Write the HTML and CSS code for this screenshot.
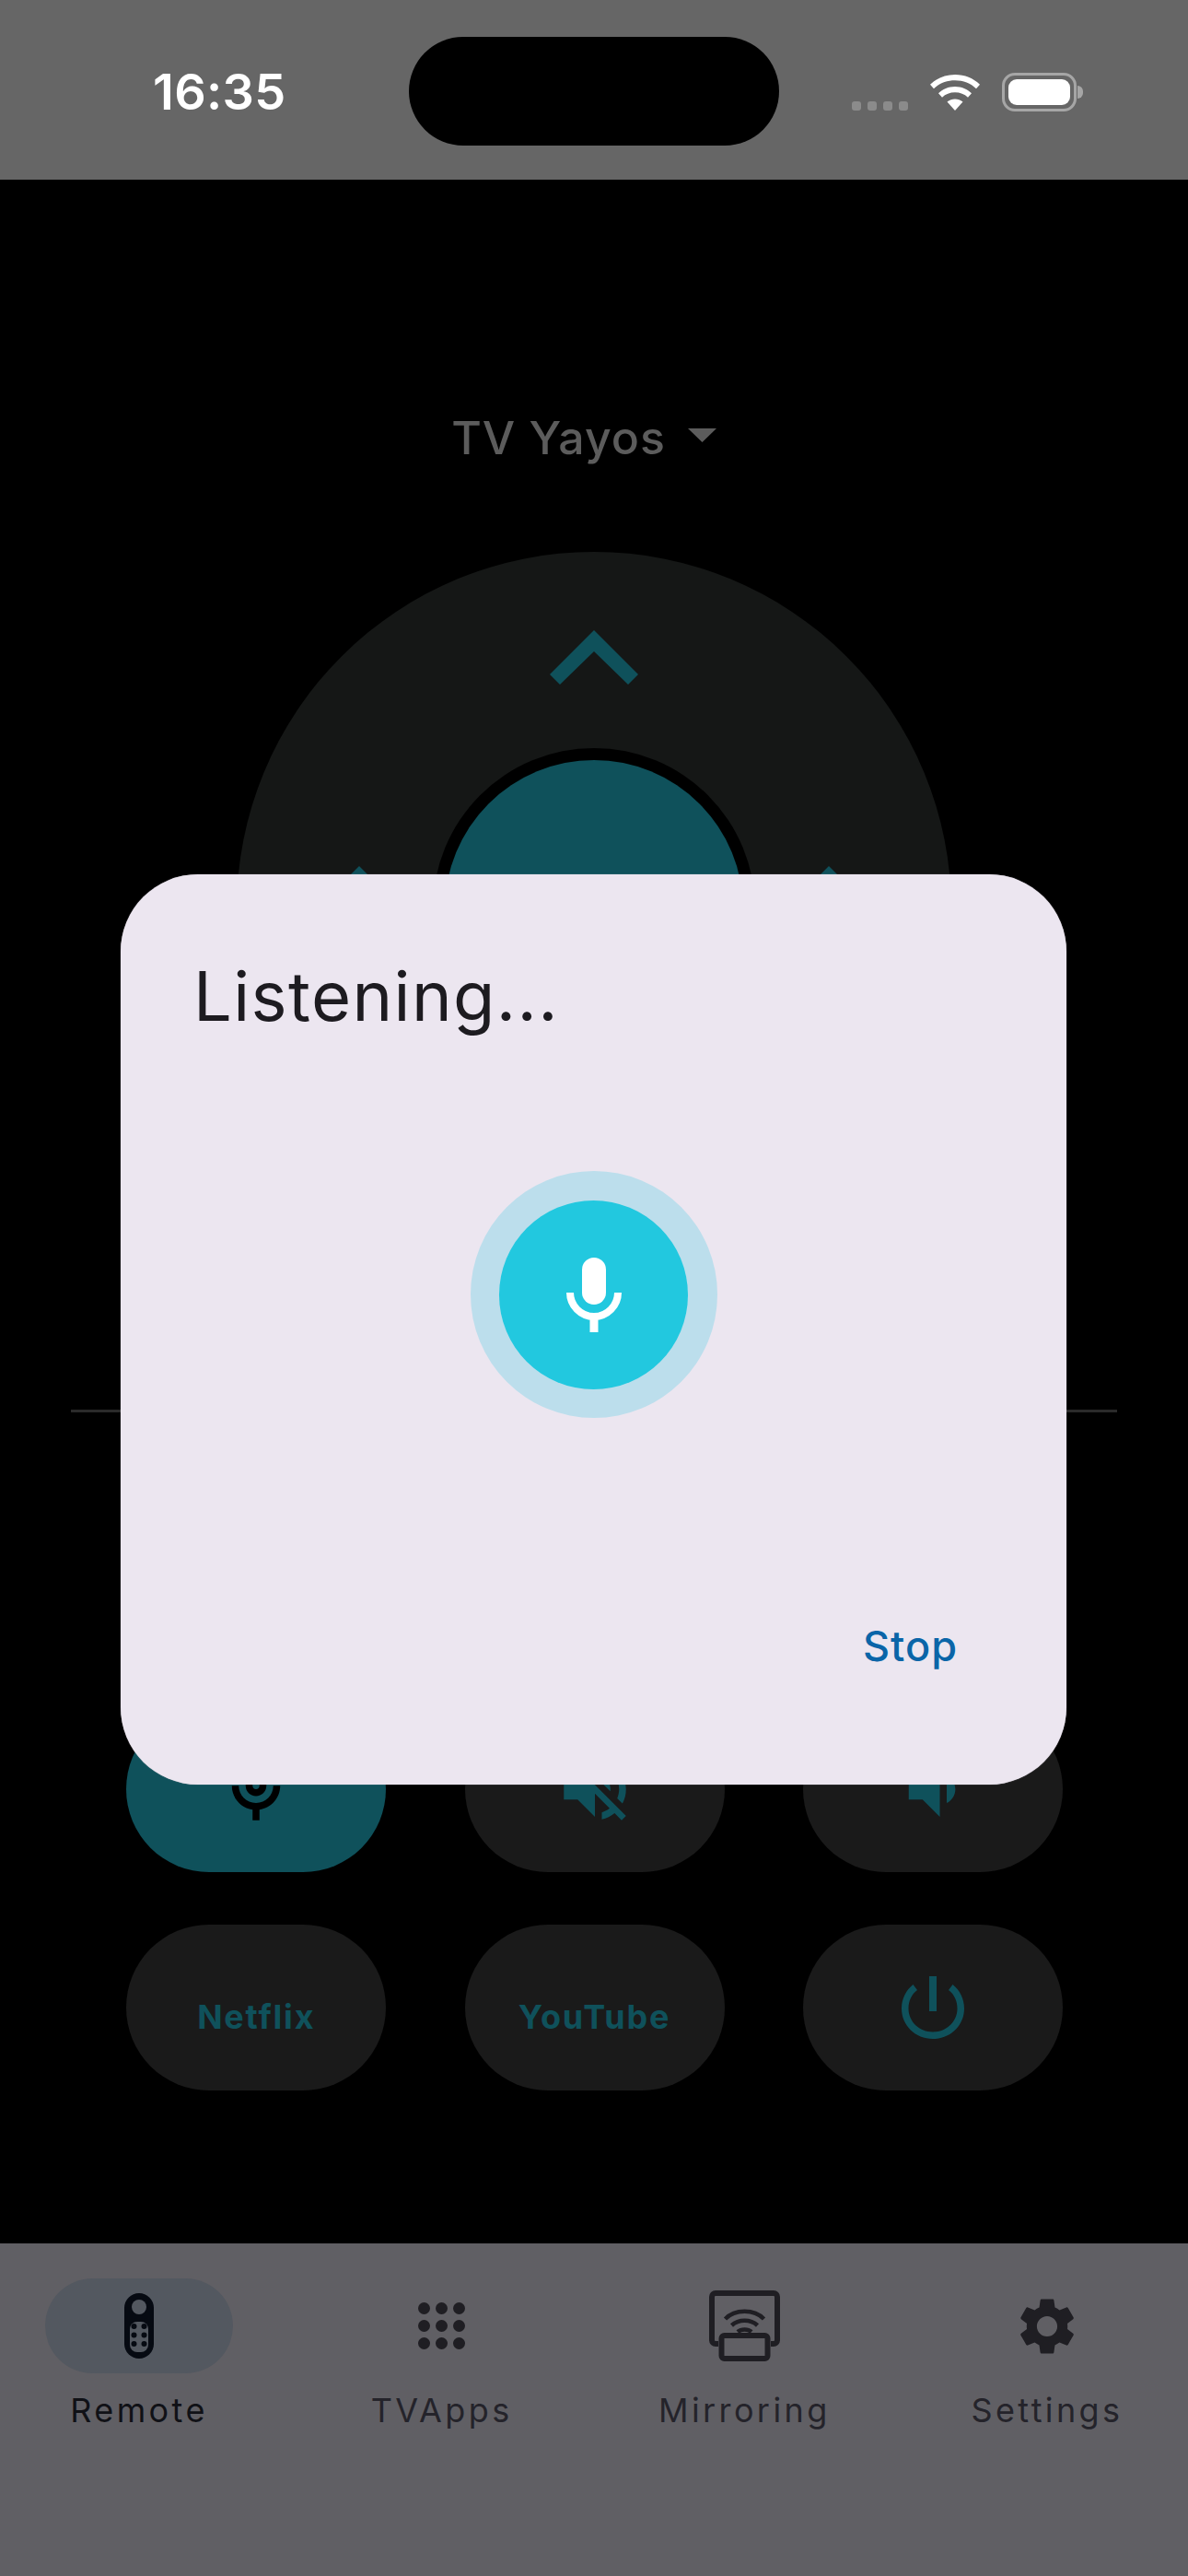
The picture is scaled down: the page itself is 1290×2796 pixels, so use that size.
FILE: index.html
```html
<!doctype html>
<html>
<head>
<title>TV Remote</title>
<link rel="stylesheet" href="styles.css">
</head>
<body>
<div class="screen">
    <header class="status-bar">
        <span class="clock">16:35</span>
        <div class="island"></div>
        <div class="status-icons">
            <div class="signal"><i></i><i></i><i></i><i></i></div>
            <svg class="wifi" viewBox="0 0 54 39" fill="#fff">
                <path d="M27 39 18.500 29.500C23.500 25.500 30.500 25.500 35.500 29.500Z"/>
                <path d="M27 13C34 13 40.600 15.800 45 20.200L41 24.700C37.300 21.200 32.500 19.300 27 19.300S16.700 21.200 13 24.700L9 20.200C13.400 15.800 20 13 27 13Z"/>
                <path d="M27 0C37.500 0 47 4 54 10.700L50 15.200C44 9.500 36 6.300 27 6.300S10 9.500 4 15.200L0 10.700C7 4 16.500 0 27 0Z"/>
            </svg>
            <div class="battery"><div class="battery-fill"></div></div>
            <div class="battery-cap"></div>
        </div>
    </header>

    <main class="remote">
        <div class="device-picker">
            <span>TV Yayos</span>
            <svg class="caret" viewBox="0 0 31 15"><path d="M0 0H31L15.500 15Z"/></svg>
        </div>

        <div class="dpad">
            <svg class="chevron chevron-up" viewBox="0 0 96 59"><path d="M48 0 96 48 85 59 48 23 11 59 0 48Z"/></svg>
            <svg class="chevron chevron-left" viewBox="0 0 59 96"><path d="M0 48 48 0 59 11 23 48 59 85 48 96Z"/></svg>
            <svg class="chevron chevron-right" viewBox="0 0 59 96"><path d="M59 48 11 0 0 11 36 48 0 85 11 96Z"/></svg>
            <div class="dpad-ring"><div class="dpad-ok"></div></div>
        </div>

        <div class="divider"></div>

        <div class="button-grid">
            <div class="pill pill-active">
                <svg class="pill-icon" viewBox="0 0 24 24"><path fill="#000" d="M12 14c1.660 0 3-1.340 3-3V5c0-1.660-1.340-3-3-3S9 3.340 9 5v6c0 1.660 1.340 3 3 3zm-1-9c0-.55.45-1 1-1s1 .45 1 1v6c0 .55-.45 1-1 1s-1-.45-1-1V5zm6 6c0 2.760-2.240 5-5 5s-5-2.240-5-5H5c0 3.530 2.610 6.430 6 6.920V21h2v-3.080c3.390-.49 6-3.390 6-6.920h-2z"/></svg>
            </div>
            <div class="pill">
                <svg class="pill-icon" viewBox="0 0 24 24"><path d="M16.500 12c0-1.770-1.020-3.290-2.500-4.030v2.210l2.450 2.450c.03-.2.050-.41.050-.63zm2.500 0c0 .94-.2 1.820-.54 2.640l1.510 1.510C20.630 14.910 21 13.500 21 12c0-4.280-2.990-7.860-7-8.770v2.060c2.890.86 5 3.540 5 6.710zM4.270 3 3 4.270 7.730 9H3v6h4l5 5v-6.730l4.250 4.250c-.67.52-1.420.93-2.250 1.180v2.060c1.380-.31 2.630-.95 3.690-1.810L19.730 21 21 19.730l-9-9L4.270 3zM12 4 9.910 6.090 12 8.180V4z"/></svg>
            </div>
            <div class="pill">
                <svg class="pill-icon" viewBox="0 0 24 24"><path d="M5 9v6h4l5 5V4L9 9H5zm13.500 3c0-1.770-1.020-3.290-2.500-4.030v8.050c1.480-.73 2.500-2.250 2.500-4.020z"/></svg>
            </div>
            <div class="pill"><span class="pill-label">Netflix</span></div>
            <div class="pill"><span class="pill-label">YouTube</span></div>
            <div class="pill">
                <svg class="pill-icon power" viewBox="0 0 68 68"><path d="M30 0h8v38h-8zM12.500 9l4.500 6C10.500 20 7.500 27 7.500 35 7.500 49.500 19.500 60.500 34 60.500S60.500 49.500 60.500 35c0-8-3-15-9.500-20l4.500-6C63 15 68 24.500 68 35c0 18.500-15 33-34 33S0 53.500 0 35C0 24.500 5 15 12.500 9z"/></svg>
            </div>
        </div>
    </main>

    <nav class="tab-bar">
        <div class="tab">
            <div class="tab-icon tab-icon-active">
                <svg class="remote-icon" viewBox="0 0 32 71">
                    <rect width="32" height="71" rx="16" fill="#060a12"/>
                    <circle cx="16" cy="15" r="8" fill="#535860"/>
                    <rect x="6" y="31" width="20" height="33" rx="8" fill="#535860"/>
                    <g fill="#060a12">
                        <circle cx="10.500" cy="36" r="3"/><circle cx="21.500" cy="36" r="3"/>
                        <circle cx="10.500" cy="45.500" r="3"/><circle cx="21.500" cy="45.500" r="3"/>
                        <circle cx="10.500" cy="55" r="3"/><circle cx="21.500" cy="55" r="3"/>
                    </g>
                </svg>
            </div>
            <span class="tab-label tab-label-active">Remote</span>
        </div>
        <div class="tab">
            <div class="tab-icon">
                <div class="apps-grid"><i></i><i></i><i></i><i></i><i></i><i></i><i></i><i></i><i></i></div>
            </div>
            <span class="tab-label">TVApps</span>
        </div>
        <div class="tab">
            <div class="tab-icon">
                <svg class="mirror-icon" viewBox="0 0 77 77">
                    <path d="M10 58H7a4 4 0 0 1-4-4V7a4 4 0 0 1 4-4h63a4 4 0 0 1 4 4v47a4 4 0 0 1-4 4h-3" fill="none" stroke="#1f1e23" stroke-width="6"/>
                    <rect x="13.500" y="49" width="50" height="25" rx="3" fill="none" stroke="#1f1e23" stroke-width="6"/>
                    <g fill="none" stroke="#1f1e23" stroke-width="4.500">
                        <path d="M17.500 31C28 20 49 20 59.500 31"/>
                        <path d="M24.500 38C32 31 45 31 52.500 38"/>
                        <path d="M31 45C35 41.500 42 41.500 46 45"/>
                    </g>
                </svg>
            </div>
            <span class="tab-label">Mirroring</span>
        </div>
        <div class="tab">
            <div class="tab-icon">
                <svg class="gear-icon" viewBox="0 0 24 24"><path d="M19.140 12.940c.04-.3.060-.61.060-.94 0-.32-.02-.64-.07-.94l2.030-1.580c.18-.14.230-.41.120-.61l-1.920-3.320c-.12-.22-.37-.29-.59-.22l-2.390.96c-.5-.38-1.030-.7-1.620-.94l-.36-2.540c-.04-.24-.24-.41-.48-.41h-3.840c-.24 0-.43.170-.47.410l-.36 2.540c-.59.240-1.130.57-1.620.94l-2.390-.96c-.22-.08-.47 0-.59.220L2.740 8.870c-.12.21-.08.470.12.610l2.030 1.580c-.05.3-.09.630-.09.940s.02.640.07.940l-2.030 1.580c-.18.140-.23.410-.12.610l1.920 3.320c.12.220.37.290.59.220l2.390-.96c.5.380 1.030.7 1.620.94l.36 2.540c.05.240.24.410.48.410h3.840c.24 0 .44-.17.470-.41l.36-2.540c.59-.24 1.130-.56 1.620-.94l2.390.96c.22.080.47 0 .59-.22l1.920-3.320c.12-.22.070-.47-.12-.61l-2.010-1.580zM12 15.600c-1.980 0-3.600-1.620-3.600-3.600s1.620-3.600 3.600-3.600 3.600 1.620 3.600 3.600-1.620 3.600-3.600 3.600z"/></svg>
            </div>
            <span class="tab-label">Settings</span>
        </div>
    </nav>

    <div class="dialog">
        <h1 class="dialog-title">Listening...</h1>
        <div class="dialog-body">
            <div class="mic-halo">
                <div class="mic-circle">
                    <svg class="mic-icon" viewBox="0 0 60 81"><rect x="17" width="26" height="51" rx="13" fill="#fff"/><path d="M4 38C4 52 15.500 64 30 64S56 52 56 38" fill="none" stroke="#fff" stroke-width="8"/><rect x="25.500" y="62" width="9" height="19" fill="#fff"/></svg>
                </div>
            </div>
        </div>
        <div class="dialog-actions"><span class="dialog-button">Stop</span></div>
    </div>
</div>
</body>
</html>
```

FILE: styles.css
```css
html, body
{
    margin:0;
    background:#000;
}
.screen
{
    position:relative;
    width:1290px;
    height:2796px;
    overflow:hidden;
    display:flex;
    flex-direction:column;
    font-family:Inter, "Liberation Sans", sans-serif;
}

/* status bar */
.status-bar
{
    height:195px;
    flex:none;
    box-sizing:border-box;
    padding-left:166px;
    background:#666;
    display:flex;
    align-items:flex-start;
}
.clock
{
    width:278px;
    margin-top:70px;
    font-size:54px;
    line-height:60px;
    font-weight:600;
    letter-spacing:0.300px;
    color:#fff;
}
.island
{
    width:402px;
    height:118px;
    margin-top:40px;
    border-radius:59px;
    background:#000;
}
.status-icons
{
    margin:79px 0 0 79px;
    display:flex;
    align-items:flex-end;
}
.signal
{
    display:flex;
    gap:7px;
    margin-bottom:1px;
}
.signal i
{
    width:10px;
    height:10px;
    border-radius:3px;
    background:#8b8b8b;
}
.wifi
{
    width:54px;
    height:39px;
    margin:0 24px 1px 24px;
}
.battery
{
    width:81px;
    height:42px;
    box-sizing:border-box;
    padding:4px;
    border:3px solid #a6a6a6;
    border-radius:14px;
}
.battery-fill
{
    height:100%;
    border-radius:9px;
    background:#fff;
}
.battery-cap
{
    width:6px;
    height:14px;
    margin:0 0 14px 1px;
    border-radius:0 7px 7px 0;
    background:#a6a6a6;
}

/* remote */
.remote
{
    flex:1;
    display:flex;
    flex-direction:column;
    align-items:center;
}
.device-picker
{
    margin:250px 22px 0 0;
    height:60px;
    display:flex;
    align-items:center;
    gap:24px;
    color:#5c5c5c;
    font-size:50px;
    font-weight:500;
    letter-spacing:1px;
}
.caret
{
    width:31px;
    height:15px;
    margin-bottom:6px;
    fill:#5c5c5c;
}
.dpad
{
    position:relative;
    margin-top:94px;
    width:776px;
    height:776px;
    border-radius:50%;
    background:#151716;
    display:flex;
    align-items:center;
    justify-content:center;
}
.chevron
{
    position:absolute;
    fill:#0f515b;
}
.chevron-up
{
    left:340px;
    top:85px;
    width:96px;
    height:59px;
}
.chevron-left
{
    left:85px;
    top:341px;
    width:59px;
    height:96px;
}
.chevron-right
{
    right:85px;
    top:341px;
    width:59px;
    height:96px;
}
.dpad-ring
{
    width:350px;
    height:350px;
    border-radius:50%;
    background:#000;
    display:flex;
    align-items:center;
    justify-content:center;
}
.dpad-ok
{
    width:324px;
    height:324px;
    border-radius:50%;
    background:#0f515b;
}
.divider
{
    margin-top:155px;
    width:1136px;
    height:3px;
    background:#2a2a2a;
}
.button-grid
{
    margin:319px 0 0 1px;
    display:grid;
    grid-template-columns:repeat(3, 282px);
    column-gap:85.250px;
    row-gap:57px;
}
.pill
{
    height:180px;
    border-radius:90px;
    background:#1a1a1a;
    display:flex;
    align-items:center;
    justify-content:center;
}
.pill-active
{
    background:#0f515b;
}
.pill-icon
{
    width:90px;
    height:90px;
    fill:#0f515b;
}
.power
{
    width:68px;
    height:68px;
}
.pill-label
{
    margin-top:20px;
    color:#0f515b;
    font-size:36px;
    font-weight:700;
    letter-spacing:1.800px;
}

/* bottom tabs */
.tab-bar
{
    height:361px;
    flex:none;
    box-sizing:border-box;
    padding:38px 51px 0 49px;
    background:#605f64;
    display:flex;
    justify-content:space-between;
}
.tab
{
    width:204px;
    display:flex;
    flex-direction:column;
    align-items:center;
}
.tab-icon
{
    width:204px;
    height:103px;
    border-radius:52px;
    display:flex;
    align-items:center;
    justify-content:center;
}
.tab-icon-active
{
    background:#535860;
}
.remote-icon
{
    width:32px;
    height:71px;
}
.apps-grid
{
    display:grid;
    grid-template-columns:repeat(3, 13px);
    gap:6px;
}
.apps-grid i
{
    width:13px;
    height:13px;
    border-radius:50%;
    background:#1f1e23;
}
.mirror-icon
{
    width:77px;
    height:77px;
}
.gear-icon
{
    width:74px;
    height:74px;
    fill:#1f1e23;
}
.tab-label
{
    margin-top:18px;
    white-space:nowrap;
    font-size:36px;
    line-height:44px;
    letter-spacing:3.400px;
    color:#24232a;
}
.tab-label-active
{
    color:#101116;
}

/* listening dialog */
.dialog
{
    position:absolute;
    left:131px;
    top:949px;
    width:1027px;
    height:988px;
    box-sizing:border-box;
    padding:90px 79px 0;
    border-radius:84px;
    background:#ece6f0;
    box-shadow:0 0 1px #b9b4bd;
    display:flex;
    flex-direction:column;
}
.dialog-title
{
    margin:0;
    font-size:74px;
    line-height:84px;
    font-weight:400;
    letter-spacing:1.400px;
    color:#1d1b20;
}
.dialog-body
{
    margin-top:148px;
    display:flex;
    justify-content:center;
}
.mic-halo
{
    width:268px;
    height:268px;
    border-radius:50%;
    background:#bcdeec;
    display:flex;
    align-items:center;
    justify-content:center;
}
.mic-circle
{
    width:205px;
    height:205px;
    border-radius:50%;
    background:#22c8df;
    display:flex;
    align-items:center;
    justify-content:center;
}
.mic-icon
{
    width:60px;
    height:81px;
}
.dialog-actions
{
    margin-top:218px;
    padding-right:39px;
    display:flex;
    justify-content:flex-end;
}
.dialog-button
{
    font-size:45px;
    line-height:60px;
    font-weight:500;
    letter-spacing:1px;
    color:#0a65a8;
}
```
